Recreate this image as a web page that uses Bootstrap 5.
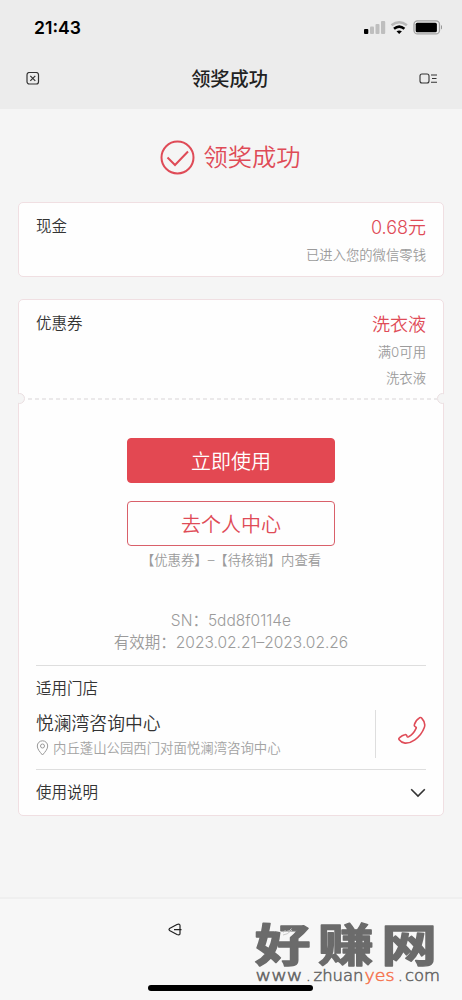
<!DOCTYPE html>
<html lang="zh-CN">
<head>
<meta charset="utf-8">
<meta name="viewport" content="width=device-width, initial-scale=1">
<title>领奖成功</title>
<link href="https://cdn.jsdelivr.net/npm/bootstrap@5.3.0/dist/css/bootstrap.min.css" rel="stylesheet">
<style>
:root{--brand:#df4b57;--ink:#333;--soft:#9b9b9b}
body{font-family:"Inter","Noto Sans CJK SC",sans-serif;font-weight:350;background:#f5f5f5;color:var(--ink);height:1000px;overflow:hidden}
svg{display:block;flex:none}
.topbar{background:#ececec;height:109px}
.statusbar{height:56px;padding:0 20px 0 34px}
.clock{font-size:17.6px;font-weight:600;color:#000;line-height:56px}
.titlebar{height:45px;padding:0 24px 0 26px}
.titlebar h1{font-size:19.2px;font-weight:500;color:#222;line-height:45px;padding-top:1px}
.hero{height:93px;padding:3px 1px 0 0;color:var(--brand);font-size:24.3px;gap:8px}
.hero span{padding-top:1px}
.panel{margin:0 18px;background:#fefefe;border:1px solid #f0dfe2;border-radius:5px;padding:0 17px}
.cash{height:75px;padding-top:11px}
.coupon{height:517px;margin-top:22px}
.coupon-head{height:99px;padding-top:11px}
.label{font-size:15.5px;line-height:26px}
.amount{font-size:18px;line-height:28px;color:var(--brand)}
.note{font-size:13.35px;line-height:26px;color:var(--soft)}
.tear{margin:-6px -18px 0;height:11px;overflow:hidden}
.notch{width:11px;height:11px;flex:none;border:1px solid #eadfe1;border-radius:50%;background:#f5f5f5}
.notch.start{margin-left:-4px}.notch.end{margin-right:-4px}
.act{padding-top:34px}
.main-btn{--bs-btn-padding-y:0;--bs-btn-border-radius:4px;--bs-btn-font-weight:350;width:208px;height:45px;font-size:20px;line-height:43px;padding-top:2px}
.fill-btn{--bs-btn-color:#fff;--bs-btn-bg:#e34852;--bs-btn-border-color:#e34852}
.line-btn{--bs-btn-color:var(--brand);--bs-btn-border-color:#d9606a;margin-top:18px}
.tip{margin-top:1px}
.serial{font-size:15.5px;line-height:22.4px;color:var(--soft);margin-top:36.6px;height:45px}
.rule{border-top:1px solid #dedede}
.store-head{margin-top:10.4px;padding-top:10px;height:45px}
.store{height:49px}
.store-name{font-size:17.8px;line-height:26px;padding-top:2px}
.address{font-size:13.4px;line-height:22px;color:#a3a3a3;gap:4px}
.usage{margin-top:10px;height:45px;padding-top:2px}
.call{width:51px;height:48px;border-left:1px solid #dedede;padding-bottom:6px}
.bottombar{margin-top:81px;height:103px;border-top:2px solid #efefef;background:#f7f7f7}
.home{position:absolute;left:148px;bottom:9px;width:165px;height:6px;border-radius:3px;background:#000}
.brandmark{position:absolute;left:250px;top:900px}
</style>
</head>
<body class="position-relative">
<header class="topbar">
  <div class="statusbar d-flex justify-content-between align-items-center">
    <span class="clock">21:43</span>
    <svg width="80" height="18" viewBox="362 19 80 18">
      <rect x="364" y="29" width="4.3" height="5" rx="1"/><g fill="#bebebe"><rect x="370" y="26.5" width="4" height="7.5" rx="1"/><rect x="375.500" y="24" width="4" height="10" rx="1"/><rect x="381" y="21" width="4.200" height="13" rx="1"/></g>
      <g fill="none" stroke-width="2.500"><path d="M391.500 25.200q7.700-6 15.400 0" stroke="#b9b9b9"/><path d="M394 28.800q5.200-4.400 10.400 0" stroke="#000"/></g><path d="M396.500 31.300q2.700-1.800 5.400 0L399.200 34z"/>
      <rect x="414" y="20.900" width="25.500" height="13" rx="3.500" fill="none" stroke="#a2a2a2" stroke-width="1.300"/><rect x="415.700" y="22.700" width="21.200" height="9.500" rx="1.500"/><path d="M441 25v4.500q3-2.200 0-4.500" fill="#999"/>
    </svg>
  </div>
  <div class="titlebar d-flex justify-content-between align-items-center">
    <svg width="14" height="14" viewBox="0 0 14 14" fill="none" stroke="#333" stroke-width="1.200"><rect x="1" y=".500" width="11.500" height="11.500" rx="2.300"/><path d="M4.300 3.800l5 5M9.300 3.800l-5 5"/></svg>
    <h1 class="mb-0">领奖成功</h1>
    <svg width="19" height="12" viewBox="0 0 19 12" fill="none" stroke="#333" stroke-width="1.100"><rect x="1" y="1" width="9" height="9" rx="2"/><path d="M12 2h6M13 5.500h4.500M12 9.200h6"/></svg>
  </div>
</header>
<main>
  <div class="hero d-flex justify-content-center align-items-center">
    <svg width="35" height="35" viewBox="0 0 35 35" fill="none" stroke="#df4b57" stroke-width="2"><circle cx="17.500" cy="17.500" r="16"/><path d="M7.500 17.500l7.500 7.500 13-13.500"/></svg>
    <span>领奖成功</span>
  </div>
  <section class="panel cash d-flex justify-content-between">
    <span class="label">现金</span>
    <div class="text-end"><div class="amount">0.68元</div><div class="note">已进入您的微信零钱</div></div>
  </section>
  <section class="panel coupon">
    <div class="coupon-head d-flex justify-content-between">
      <span class="label">优惠券</span>
      <div class="text-end"><div class="amount">洗衣液</div><div class="note">满0可用</div><div class="note">洗衣液</div></div>
    </div>
    <div class="tear d-flex align-items-center">
      <span class="notch start"></span>
      <svg class="flex-fill" height="2" style="min-width:0"><path d="M3 1H430" stroke="#e5e2e3" stroke-width="1.500" stroke-dasharray="4 3"/></svg>
      <span class="notch end"></span>
    </div>
    <div class="d-flex flex-column align-items-center act">
      <button class="btn main-btn fill-btn" type="button">立即使用</button>
      <button class="btn main-btn line-btn" type="button">去个人中心</button>
      <div class="note tip">【优惠券】–【待核销】内查看</div>
      <div class="serial text-center">SN：5dd8f0114e<br>有效期：2023.02.21–2023.02.26</div>
    </div>
    <div class="rule label store-head">适用门店</div>
    <div class="store d-flex align-items-center justify-content-between">
      <div>
        <div class="store-name">悦澜湾咨询中心</div>
        <div class="address d-flex align-items-center">
          <svg width="13" height="16" viewBox="0 0 12 16" fill="none" stroke="#999" stroke-width="1"><path d="M6 15C3 11.500.8 9 .8 6a5.200 5.200 0 0 1 10.400 0C11.200 9 9 11.500 6 15z"/><circle cx="6" cy="6" r="2"/></svg>
          <span>内丘蓬山公园西门对面悦澜湾咨询中心</span>
        </div>
      </div>
      <div class="call d-flex align-items-center justify-content-end">
        <svg width="29" height="30" viewBox="397 716 29 30" fill="none" stroke="#df4b57" stroke-width="1.600" stroke-linejoin="round"><path d="M419.500 717.800q1.300-.8 2.200.3 4.300 4.800 2.600 9.400-2.700 7.500-9.500 12.300-5 3.600-9.800 3.300-3.600-.3-5.800-3.300-.9-1.200.4-2.200 2.600-2.400 5.200-2.900 1.800-.4 2.200 1.500.3 1.100 1.600.6 4.600-2.200 7.600-8.600.4-1-.8-1.400-1.500-.6-1-2.300.9-4 5.100-6.700z"/></svg>
      </div>
    </div>
    <div class="rule usage label d-flex justify-content-between align-items-center">
      <span>使用说明</span>
      <svg width="16" height="10" viewBox="0 0 16 10" fill="none" stroke="#333" stroke-width="1.600"><path d="M1.200 1.200L8 8l6.800-6.800"/></svg>
    </div>
  </section>
</main>
<footer class="bottombar">
  <svg width="462" height="60" viewBox="0 899 462 60" fill="none" stroke="#222" stroke-width="1.200" stroke-linejoin="round"><path d="M169.500 928.500q-1 1 0 2l7.500 4q3 1 3-1v-8q0-2-3-1zM174 929.600h7.500"/></svg>
</footer>
<div class="home"></div>
<svg class="brandmark" width="200" height="100" viewBox="250 900 200 100">
  <text transform="translate(0 962) scale(1.240 1)" x="205.500 256.500 307.500" font-family="Noto Sans CJK SC,sans-serif" font-weight="700" font-size="45" fill="#6b6b6b" stroke="#6b6b6b" stroke-width="1.400" stroke-linejoin="round">好赚网</text>
  <path d="M283.500 932.500q1-3 3-1 3 0 5-3M283 935q4 0 9-5" fill="none" stroke="#c8c8c8" stroke-width="1"/>
  <g font-family="DejaVu Sans,sans-serif" font-size="15" fill="#666" stroke="#666" stroke-width=".5">
    <text x="255.500" y="981" textLength="47" lengthAdjust="spacingAndGlyphs">www</text>
    <text x="306" y="981">.</text>
    <text x="313.500" y="981" textLength="50" lengthAdjust="spacingAndGlyphs">zhuan</text>
    <text x="364.500" y="981" textLength="30" lengthAdjust="spacingAndGlyphs" fill="#f5744f" stroke="#f5744f">yes</text>
    <text x="398" y="981">.</text>
    <text x="405" y="981" textLength="35" lengthAdjust="spacingAndGlyphs">com</text>
  </g>
</svg>
<script src="https://cdn.jsdelivr.net/npm/bootstrap@5.3.0/dist/js/bootstrap.bundle.min.js"></script>
</body>
</html>
